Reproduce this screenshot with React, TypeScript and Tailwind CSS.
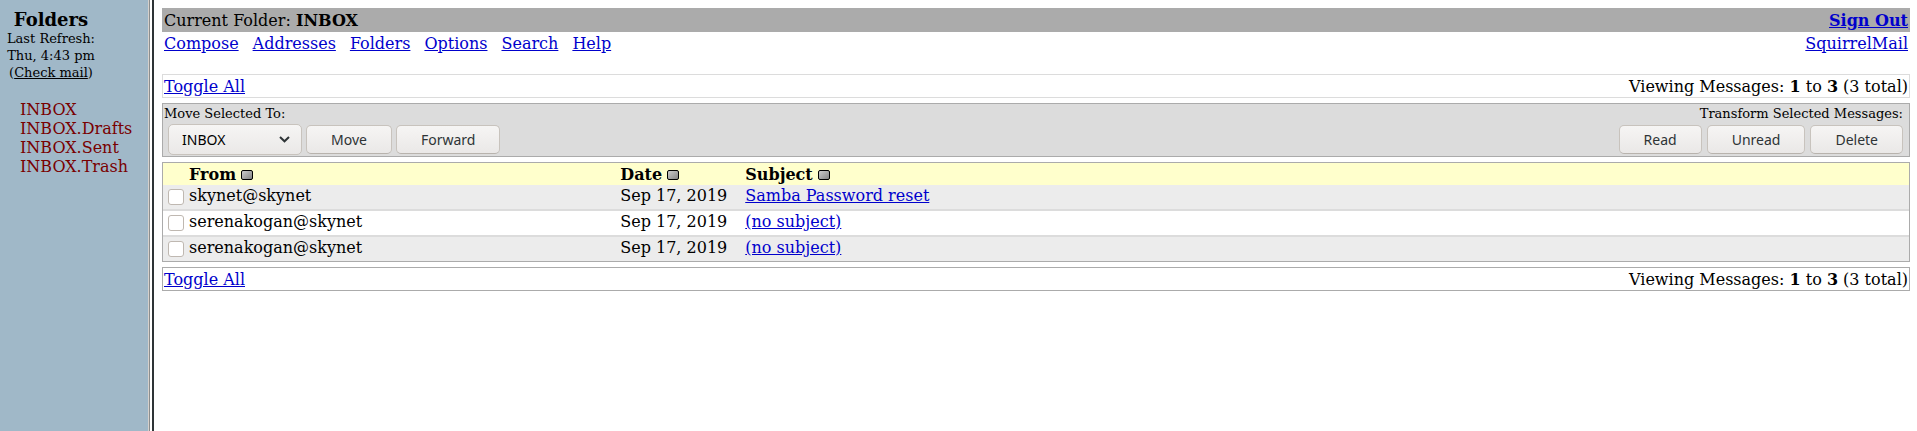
import type { ReactNode } from "react";

const folders = ["INBOX", "INBOX.Drafts", "INBOX.Sent", "INBOX.Trash"];
const menu = ["Compose", "Addresses", "Folders", "Options", "Search", "Help"];
const messages = [
  { id: 3, from: "skynet@skynet", date: "Sep 17, 2019", subject: "Samba Password reset" },
  { id: 2, from: "serenakogan@skynet", date: "Sep 17, 2019", subject: "(no subject)" },
  { id: 1, from: "serenakogan@skynet", date: "Sep 17, 2019", subject: "(no subject)" },
];

function Link({ children, className = "" }: { children: ReactNode; className?: string }) {
  return (
    <a href="#" className={`text-[#0000cc] underline ${className}`}>
      {children}
    </a>
  );
}

function Button({ children }: { children: ReactNode }) {
  return (
    <button
      type="button"
      className="h-[29px] rounded-[5px] border border-[#c8c3bd] border-b-[#b8b3ad] bg-linear-to-b from-[#f6f5f4] to-[#eae8e7] px-6 font-['Noto_Sans',sans-serif] text-sm leading-5 text-[#2e3436]"
    >
      {children}
    </button>
  );
}

function SortButton({ label }: { label: string }) {
  return (
    <a href="#" aria-label={`Sort by ${label}`} className="ml-[5px] inline-block">
      <svg width="12" height="10" viewBox="0 0 12 10" aria-hidden="true">
        <defs>
          <linearGradient id={`sort-${label}`} x1="0" y1="0" x2="1" y2="1">
            <stop offset="0" stopColor="#d0d0d0" />
            <stop offset="1" stopColor="#808080" />
          </linearGradient>
        </defs>
        <rect x="0.5" y="0.5" width="11" height="9" rx="1.5" fill={`url(#sort-${label})`} stroke="#000" />
      </svg>
    </a>
  );
}

function Paginator({ className }: { className: string }) {
  return (
    <div className={`flex h-6 items-center justify-between border px-px pt-0.5 ${className}`}>
      <Link>Toggle All</Link>
      <span>
        Viewing Messages: <b>1</b> to <b>3</b> (3 total)
      </span>
    </div>
  );
}

export default function App() {
  return (
    <div className="flex min-h-screen bg-white font-['DejaVu_Serif',serif] text-base leading-5 text-black">
      <aside className="w-[148px] shrink-0 bg-[#a0b8c8] pt-[9px]">
        <div className="ml-1.5 w-[90px] text-center text-[13px] leading-[17px]">
          <h1 className="text-lg leading-[21px] font-bold">Folders</h1>
          <p>Last Refresh:</p>
          <p>Thu, 4:43 pm</p>
          <p>
            (
            <a href="#" className="underline">
              Check mail
            </a>
            )
          </p>
        </div>
        <ul className="mt-[19px] ml-5 leading-[19px]">
          {folders.map((f) => (
            <li key={f}>
              <a href="#" className="text-[#790000]">
                {f}
              </a>
            </li>
          ))}
        </ul>
      </aside>
      <div className="w-1.5 shrink-0 border-r-2 border-l border-l-[#d5d0cc] border-r-[#2e3436]">
        <div className="h-full w-px bg-[#8b8e8f]" />
      </div>

      <main className="min-w-0 flex-1 pt-2 pr-[7px] pb-2 pl-2">
        <header className="flex h-6 items-center justify-between bg-[#ababab] px-0.5 pt-0.5">
          <span>
            Current Folder: <b>INBOX</b>
          </span>
          <Link className="font-bold">Sign Out</Link>
        </header>
        <nav className="mb-[19px] flex justify-between px-0.5 pt-px leading-[22px]">
          <div className="flex gap-3.5">
            {menu.map((m) => (
              <Link key={m}>{m}</Link>
            ))}
          </div>
          <Link>SquirrelMail</Link>
        </nav>

        <Paginator className="border-[#dcdcdc]" />

        <section className="mt-[5px] flex h-[54px] justify-between border border-[#ababab] bg-[#dcdcdc]">
          <div>
            <label htmlFor="target" className="block pl-px text-[13px] leading-5">
              Move Selected To:
            </label>
            <div className="flex items-center gap-1 pl-[5px]">
              <div className="grid items-center">
                <select
                  id="target"
                  defaultValue="INBOX"
                  className="col-start-1 row-start-1 h-[31px] w-[134px] appearance-none rounded-[5px] border border-[#c8c3bd] bg-linear-to-b from-[#f6f5f4] to-[#eae8e7] pl-[13px] font-['Noto_Sans',sans-serif] text-sm leading-5 text-black"
                >
                  {folders.map((f) => (
                    <option key={f}>{f}</option>
                  ))}
                </select>
                <svg
                  className="pointer-events-none col-start-1 row-start-1 mr-3 justify-self-end"
                  width="11"
                  height="7"
                  viewBox="0 0 11 7"
                  fill="none"
                  stroke="#2e3436"
                  strokeWidth="2"
                  aria-hidden="true"
                >
                  <path d="M1 1 5.5 5.3 10 1" />
                </svg>
              </div>
              <Button>Move</Button>
              <Button>Forward</Button>
            </div>
          </div>
          <div className="pr-1.5">
            <p className="text-right text-[13px] leading-5">Transform Selected Messages:</p>
            <div className="flex justify-end gap-[5px] pt-px">
              <Button>Read</Button>
              <Button>Unread</Button>
              <Button>Delete</Button>
            </div>
          </div>
        </section>

        <div className="my-[5px] border border-[#ababab]">
          <table className="w-full table-fixed border-collapse text-left">
            <colgroup>
              <col className="w-[26px]" />
              <col className="w-[24.7%]" />
              <col className="w-[125px]" />
              <col />
            </colgroup>
            <thead>
              <tr className="h-[22px] bg-[#ffffcc]">
                <td />
                {["From", "Date", "Subject"].map((h) => (
                  <th key={h} className="p-0 pt-0.5 font-bold">
                    {h}
                    <SortButton label={h} />
                  </th>
                ))}
              </tr>
            </thead>
            {messages.map((m) => (
              <tbody key={m.id} className="group">
                <tr className="h-6 align-top group-odd:bg-[#ececec] group-even:bg-white">
                  <td className="p-0 pt-1 pl-[5px]">
                    <input
                      type="checkbox"
                      aria-label={`Select ${m.subject} from ${m.from}`}
                      className="block size-4 appearance-none rounded-[3px] border border-[#bfb8b1] bg-white checked:bg-[#3584e4]"
                    />
                  </td>
                  <td className="p-0 pt-px">{m.from}</td>
                  <td className="p-0 pt-px">{m.date}</td>
                  <td className="p-0 pt-px">
                    <Link>{m.subject}</Link>
                  </td>
                </tr>
                <tr className="h-0.5 bg-[#dcdcdc] group-last:hidden">
                  <td colSpan={4} className="p-0" />
                </tr>
              </tbody>
            ))}
          </table>
        </div>

        <Paginator className="border-[#ababab]" />
      </main>
    </div>
  );
}
